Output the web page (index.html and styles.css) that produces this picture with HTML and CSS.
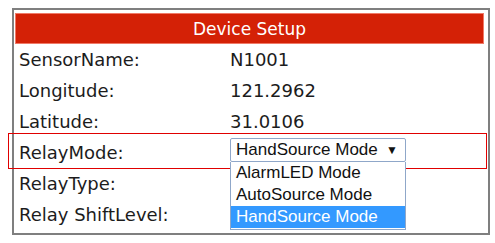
FILE: index.html
```html
<!DOCTYPE html>
<html>
<head>
<meta charset="utf-8">
<link rel="stylesheet" href="styles.css">
</head>
<body>
<div class="panel">
  <div class="header">Device Setup</div>
  <div class="row"><div class="label">SensorName:</div><div class="value">N1001</div></div>
  <div class="row"><div class="label">Longitude:</div><div class="value">121.2962</div></div>
  <div class="row"><div class="label">Latitude:</div><div class="value">31.0106</div></div>
  <div class="row row-mode">
    <div class="label">RelayMode:</div>
    <div class="value value-top">
      <div class="select-wrap">
        <div class="select"><span>HandSource Mode</span><span class="arrow">▼</span></div>
        <div class="options">
          <div class="opt">AlarmLED Mode</div>
          <div class="opt">AutoSource Mode</div>
          <div class="opt opt-sel">HandSource Mode</div>
        </div>
      </div>
    </div>
    <div class="mark"></div>
  </div>
  <div class="row"><div class="label">RelayType:</div><div class="value"></div></div>
  <div class="row"><div class="label">Relay ShiftLevel:</div><div class="value"></div></div>
</div>
</body>
</html>
```
FILE: styles.css
```css
html, body { margin: 0; padding: 0; background: #fff; }
body { padding: 8px 0 0 12px; }
.panel {
  width: 478px;
  height: 227px;
  box-sizing: border-box;
  border: 2px solid #7f7f7f;
  padding: 3px 4px 0 1px;
  font-family: "DejaVu Sans", Verdana, sans-serif;
  color: #1c1c1c;
}
.header {
  height: 31px;
  box-sizing: border-box;
  background: #d42106;
  border: 1px solid #f07a68;
  color: #fff;
  font-size: 17px;
  display: flex;
  align-items: center;
  justify-content: center;
  padding-top: 1px;
}
.row {
  position: relative;
  height: 31px;
  display: flex;
  align-items: center;
  font-size: 18px;
}
.label { width: 215px; box-sizing: border-box; padding-left: 4px; }
.value { flex: 1; }
.value-top { align-self: flex-start; padding-top: 1px; }
.select-wrap { position: relative; width: 176px; }
.select {
  height: 24px;
  box-sizing: border-box;
  border: 1px solid #8fa7c9;
  border-radius: 2px;
  display: flex;
  align-items: center;
  justify-content: space-between;
  padding: 0 7px 0 5px;
  font-family: "Liberation Sans", Arial, sans-serif;
  font-size: 17px;
  color: #111;
  background: #fff;
}
.arrow { font-size: 12px; }
.options {
  position: absolute;
  left: 0;
  top: 24px;
  width: 176px;
  box-sizing: border-box;
  border: 1px solid #8fa7c9;
  border-top: none;
  background: #fff;
  font-family: "Liberation Sans", Arial, sans-serif;
  font-size: 17px;
  color: #111;
  z-index: 2;
  padding-bottom: 1px;
}
.opt { height: 22px; line-height: 22px; padding-left: 5px; }
.opt-sel { background: #3399ff; color: #fff; }
.mark {
  position: absolute;
  left: -7px;
  right: -3px;
  top: -4px;
  bottom: -1px;
  border: 1px solid #e00000;
  pointer-events: none;
  z-index: 1;
}
```
